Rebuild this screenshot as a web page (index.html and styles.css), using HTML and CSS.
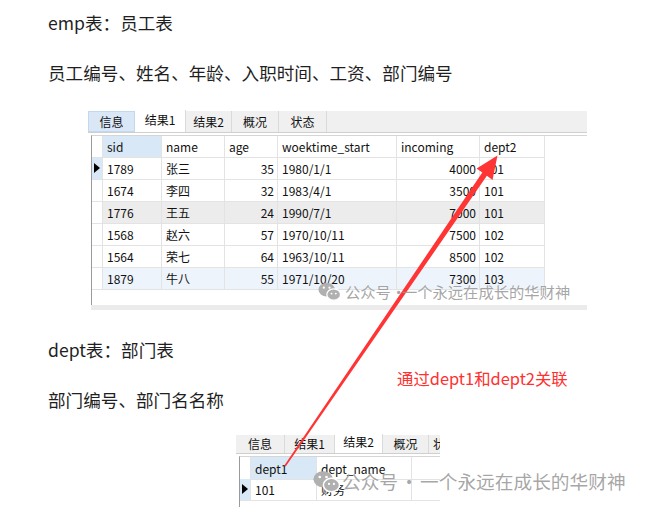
FILE: index.html
```html
<!DOCTYPE html>
<html lang="zh-CN">
<head>
<meta charset="utf-8">
<title>emp / dept</title>
<link rel="stylesheet" href="styles.css">
</head>
<body>
<div class="page">
  <p class="para p1">emp表：员工表</p>
  <p class="para p2">员工编号、姓名、年龄、入职时间、工资、部门编号</p>

  <div class="shot shot1">
    <div class="tabs">
      <span class="tab hover w47">信息</span>
      <span class="tab active w51">结果1</span>
      <span class="tab w46">结果2</span>
      <span class="tab w47">概况</span>
      <span class="tab w48">状态</span>
    </div>
    <div class="frame">
      <div class="grid g1">
        <div class="c ind"></div><div class="c sel">sid</div><div class="c">name</div><div class="c">age</div><div class="c">woektime_start</div><div class="c">incoming</div><div class="c">dept2</div>

        <div class="c ind cur"><span class="tri"></span></div><div class="c">1789</div><div class="c">张三</div><div class="c num">35</div><div class="c">1980/1/1</div><div class="c num">4000</div><div class="c">101</div>

        <div class="c ind"></div><div class="c">1674</div><div class="c">李四</div><div class="c num">32</div><div class="c">1983/4/1</div><div class="c num">3500</div><div class="c">101</div>

        <div class="c ind"></div><div class="c gray">1776</div><div class="c gray">王五</div><div class="c gray num">24</div><div class="c gray">1990/7/1</div><div class="c gray num">7000</div><div class="c gray">101</div>

        <div class="c ind"></div><div class="c">1568</div><div class="c">赵六</div><div class="c num">57</div><div class="c">1970/10/11</div><div class="c num">7500</div><div class="c">102</div>

        <div class="c ind"></div><div class="c">1564</div><div class="c">荣七</div><div class="c num">64</div><div class="c">1963/10/11</div><div class="c num">8500</div><div class="c">102</div>

        <div class="c ind"></div><div class="c blue">1879</div><div class="c blue">牛八</div><div class="c blue num">55</div><div class="c blue">1971/10/20</div><div class="c blue num">7300</div><div class="c blue">103</div>
      </div>
    </div>
    <div class="hscroll"></div>
  </div>

  <p class="para p3">dept表：部门表</p>
  <p class="note">通过dept1和dept2关联</p>
  <p class="para p4">部门编号、部门名名称</p>

  <div class="shot shot2">
    <div class="tabs tabs2">
      <span class="tab w49">信息</span>
      <span class="tab w50">结果1</span>
      <span class="tab active w48">结果2</span>
      <span class="tab w46">概况</span>
      <span class="tab w48 lastcut">状态</span>
    </div>
    <div class="frame frame2">
      <div class="grid g2">
        <div class="c ind h2"></div><div class="c sel h2">dept1</div><div class="c h2">dept_name</div><div class="c h2"></div>
        <div class="c ind cur"><span class="tri"></span></div><div class="c">101</div><div class="c">财务</div><div class="c"></div>
      </div>
    </div>
  </div>
</div>

<svg class="arrow" width="650" height="507" viewBox="0 0 650 507">
  <polygon points="284.3,465.5 482.3,172.6 476.6,168.6 497.5,155.5 492.5,180 486.9,175.8 285.7,466.5" fill="#ff3535"/>
</svg>

<div class="wm wm1">
  <svg class="wx" viewBox="0 0 24 20"><ellipse cx="9" cy="8" rx="8.6" ry="7.2" fill="#b0b0b0"/><circle cx="6" cy="6" r="1.2" fill="#fff"/><circle cx="12" cy="6" r="1.2" fill="#fff"/><ellipse cx="16.4" cy="13.2" rx="7.2" ry="6" fill="#b0b0b0" stroke="#fff" stroke-width="1.3"/><circle cx="14.2" cy="12.2" r="1" fill="#fff"/><circle cx="18.6" cy="12.2" r="1" fill="#fff"/></svg>
  <span>公众号</span><span class="dot">·</span><span>一个永远在成长的华财神</span>
</div>
<div class="wm wm2">
  <svg class="wx" viewBox="0 0 24 20"><ellipse cx="9" cy="8" rx="8.6" ry="7.2" fill="#b0b0b0"/><circle cx="6" cy="6" r="1.2" fill="#fff"/><circle cx="12" cy="6" r="1.2" fill="#fff"/><ellipse cx="16.4" cy="13.2" rx="7.2" ry="6" fill="#b0b0b0" stroke="#fff" stroke-width="1.3"/><circle cx="14.2" cy="12.2" r="1" fill="#fff"/><circle cx="18.6" cy="12.2" r="1" fill="#fff"/></svg>
  <span>公众号</span><span class="dot">·</span><span>一个永远在成长的华财神</span>
</div>
</body>
</html>
```

FILE: styles.css
```css
html, body {
  margin: 0;
  padding: 0;
  background: #fff;
}
body {
  width: 650px;
  height: 507px;
  overflow: hidden;
  position: relative;
  font-family: "Noto Sans CJK SC", "Noto Sans", sans-serif;
  color: #1f1f1f;
}
.page {
  padding: 11px 0 0 48px;
}
.para {
  margin: 0;
  font-size: 17.6px;
  line-height: 24px;
  white-space: nowrap;
}
.p2 { margin-top: 26px; }
.p3 { margin-top: 28px; }
.note {
  margin: 6px 0 0 349px;
  font-size: 16.4px;
  line-height: 20px;
  color: #ff3030;
  white-space: nowrap;
}

/* screenshots */
.shot {
  position: relative;
  overflow: hidden;
  font-size: 12px;
  color: #111;
}
.shot1 {
  margin: 25px 0 0 40px;
  width: 499px;
  height: 200px;
}
.shot2 {
  margin: 22px 0 0 188px;
  width: 204px;
  height: 80px;
}
.tabs {
  display: flex;
  height: 21px;
  margin-top: 1px;
  background: #f0f0f0;
  border-bottom: 1px solid #cfcfcf;
}
.tab {
  box-sizing: border-box;
  flex: none;
  height: 21px;
  line-height: 21px;
  text-align: center;
  background: #f0f0f0;
  border-right: 1px solid #dadada;
  white-space: nowrap;
}
.tab.hover {
  background: #d9e7f6;
  border: 1px solid #c3d7ee;
  line-height: 19px;
}
.tab.active {
  background: #fff;
  height: 23px;
  margin-top: -2px;
  line-height: 22px;
  border-right: 1px solid #dadada;
}
.tab.lastcut {
  text-align: left;
  padding-left: 4px;
}
.w46 { width: 46px; }
.w47 { width: 47px; }
.w48 { width: 48px; }
.w49 { width: 49px; }
.w50 { width: 50px; }
.w51 { width: 51px; }

.frame {
  margin: 2px 0 0 3px;
  border-top: 1px solid #d6d6d6;
  border-left: 1px solid #9a9a9a;
  height: 169px;
}
.grid {
  display: grid;
}
.g1 {
  grid-template-columns: 11px 59px 63px 53px 119px 83px 65px;
  grid-auto-rows: 22px;
}
.c {
  box-sizing: border-box;
  border-right: 1px solid #e3e3e3;
  border-bottom: 1px solid #e3e3e3;
  padding: 0 3px 0 4px;
  line-height: 21px;
  white-space: nowrap;
  overflow: hidden;
}
.c.ind {
  padding: 0;
  position: relative;
}
.c.num { text-align: right; }
.c.sel { background: #d9e8f7; }
.c.gray { background: #ececec; }
.c.blue { background: #eef4fc; }
.c.cur { background: #d9e8f7; }
.tri {
  position: absolute;
  left: 2px;
  top: 5px;
  width: 0;
  height: 0;
  border-top: 5.5px solid transparent;
  border-bottom: 5.5px solid transparent;
  border-left: 6px solid #000;
}
.hscroll {
  margin-left: 3px;
  height: 6px;
  background: #ebebeb;
}

.tabs2 {
  height: 18px;
  margin-top: 1px;
}
.tabs2 .tab {
  height: 18px;
  line-height: 18px;
}
.tabs2 .tab.active {
  height: 21px;
  margin-top: -3px;
  line-height: 20px;
}
.frame2 {
  margin: 2px 0 0 3px;
  height: 60px;
}
.g2 {
  grid-template-columns: 11px 66px 95px 40px;
  grid-auto-rows: 22px;
}
.g2 .h2 {
  height: 23px;
  line-height: 23px;
}

/* red annotation arrow */
.arrow {
  position: absolute;
  left: 0;
  top: 0;
  pointer-events: none;
}

/* watermark overlays */
.wm {
  position: absolute;
  display: flex;
  align-items: center;
  color: rgba(150, 150, 150, 0.85);
  white-space: nowrap;
  pointer-events: none;
}
.wm .dot {
  display: inline-block;
  text-align: center;
}
.wm1 {
  left: 318px;
  top: 281px;
  font-size: 15.3px;
  line-height: 20px;
}
.wm1 .dot { width: 11px; }
.wm1 .wx { width: 23px; height: 19px; margin-right: 4px; }
.wm2 {
  left: 313px;
  top: 469px;
  font-size: 18.7px;
  line-height: 24px;
}
.wm2 .dot { width: 22px; }
.wm2 .wx { width: 27px; height: 23px; margin-right: 2px; }
```
